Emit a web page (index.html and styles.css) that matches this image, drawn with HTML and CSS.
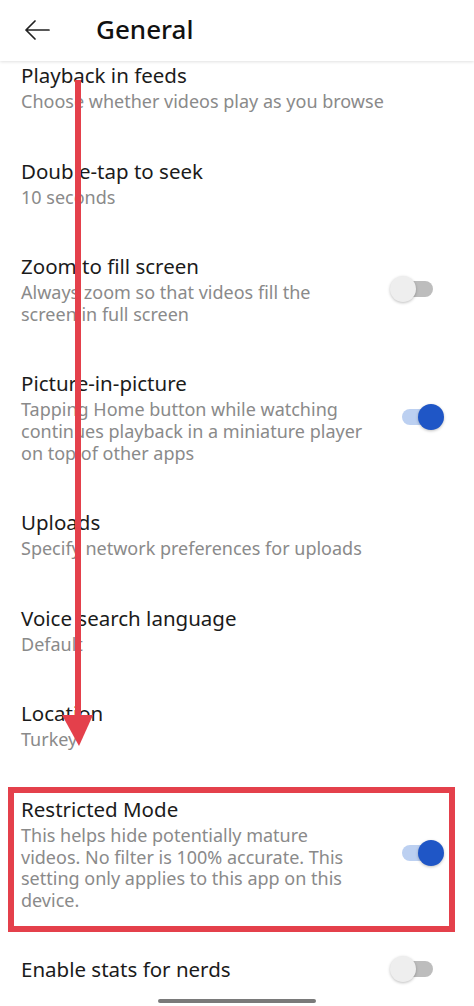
FILE: index.html
```html
<!DOCTYPE html>
<html lang="en">
<head>
<meta charset="UTF-8" />
<meta name="viewport" content="width=device-width, initial-scale=1" />
<title>General</title>
<link rel="stylesheet" href="styles.css">
</head>
<body>

<div class="screen">
    <div class="topbar">
        <svg class="back" width="26" height="20" viewBox="0 0 26 20">
            <path d="M25 10H2M11 1L2 10l9 9" fill="none" stroke="#222" stroke-width="1.7" stroke-linecap="round" stroke-linejoin="round"/>
        </svg>
        <h1>General</h1>
    </div>

    <div class="list">
        <div class="row first">
            <div class="text">
                <div class="title">Playback in feeds</div>
                <div class="sub">Choose whether videos play as you browse</div>
            </div>
        </div>
        <div class="row">
            <div class="text">
                <div class="title">Double-tap to seek</div>
                <div class="sub">10 seconds</div>
            </div>
        </div>
        <div class="row">
            <div class="text">
                <div class="title">Zoom to fill screen</div>
                <div class="sub">Always zoom so that videos fill the screen in full screen</div>
            </div>
            <div class="toggle"></div>
        </div>
        <div class="row">
            <div class="text">
                <div class="title">Picture-in-picture</div>
                <div class="sub">Tapping Home button while watching continues playback in a miniature player on top of other apps</div>
            </div>
            <div class="toggle on"></div>
        </div>
        <div class="row">
            <div class="text">
                <div class="title">Uploads</div>
                <div class="sub">Specify network preferences for uploads</div>
            </div>
        </div>
        <div class="row">
            <div class="text">
                <div class="title">Voice search language</div>
                <div class="sub">Default</div>
            </div>
        </div>
        <div class="row">
            <div class="text">
                <div class="title">Location</div>
                <div class="sub">Turkey</div>
            </div>
        </div>
        <div class="row">
            <div class="text">
                <div class="title">Restricted Mode</div>
                <div class="sub">This helps hide potentially mature videos. No filter is 100% accurate. This setting only applies to this app on this device.</div>
            </div>
            <div class="toggle on"></div>
        </div>
        <div class="row">
            <div class="text">
                <div class="title">Enable stats for nerds</div>
            </div>
            <div class="toggle"></div>
        </div>
    </div>

    <div class="home-bar"></div>

    <!-- annotation drawn over the screenshot -->
    <svg class="arrow" width="40" height="670" viewBox="0 0 40 670">
        <rect x="15" y="0" width="6" height="640" fill="#e4404b"/>
        <path d="M2 635H33L19 666Z" fill="#e4404b"/>
    </svg>
    <div class="highlight"></div>
</div>

</body>
</html>
```

FILE: styles.css
```css
body {
    margin: 0;
    background: #fff;
    font-family: "Noto Sans", "Open Sans", sans-serif;
}
.screen {
    position: relative;
    width: 474px;
    height: 1006px;
    overflow: hidden;
    background: #fff;
}
.topbar {
    height: 61px;
    display: flex;
    align-items: center;
    padding-left: 24px;
    box-shadow: 0 1px 3px rgba(0, 0, 0, 0.12);
    position: relative;
    z-index: 1;
    background: #fff;
}
.back {
    margin-top: -2px;
}
.topbar h1 {
    margin: -3px 0 0 46px;
    font-size: 26px;
    font-weight: 500;
    color: #111;
}
.row {
    display: flex;
    align-items: center;
    padding: 22px 30px 22px 21px;
}
.row.first {
    padding-top: 0;
}
.text {
    flex: 1;
    min-width: 0;
}
.title {
    font-size: 20.5px;
    line-height: 28px;
    color: #1b1b1b;
}
.sub {
    margin-top: 2px;
    font-size: 18px;
    line-height: 21.6px;
    color: #8a8a8a;
}
.toggle {
    position: relative;
    flex: none;
    width: 54px;
    height: 26px;
    margin-left: 24px;
}
.toggle::before {
    content: "";
    position: absolute;
    left: 12px;
    right: 11px;
    top: 5px;
    height: 16px;
    border-radius: 8px;
    background: #bdbdbd;
}
.toggle::after {
    content: "";
    position: absolute;
    left: 0;
    top: 0;
    width: 26px;
    height: 26px;
    border-radius: 50%;
    background: #eeeeee;
    box-shadow: 0 1px 3px rgba(0, 0, 0, 0.25);
}
.toggle.on::before {
    background: #bcd0f1;
}
.toggle.on::after {
    left: 28px;
    background: #1f56c6;
}
.home-bar {
    position: absolute;
    left: 158px;
    bottom: 3px;
    width: 158px;
    height: 4px;
    border-radius: 2px;
    background: #7a7a7a;
}
.arrow {
    position: absolute;
    left: 60px;
    top: 80px;
}
.highlight {
    position: absolute;
    left: 8px;
    top: 787px;
    width: 435px;
    height: 133px;
    border: 6px solid #e4404b;
}
```
